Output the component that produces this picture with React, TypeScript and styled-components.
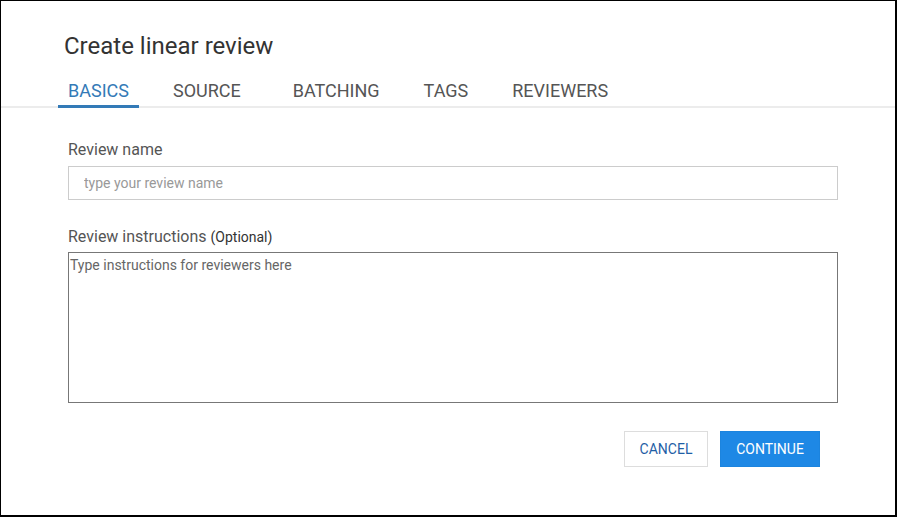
import React from 'react';
import styled, { createGlobalStyle } from 'styled-components';

const GlobalStyle = createGlobalStyle`
  html, body {
    margin: 0;
    padding: 0;
    background: #ffffff;
  }
  body {
    font-family: Roboto, 'Liberation Sans', Arial, sans-serif;
  }
  * {
    box-sizing: border-box;
  }
`;

const Frame = styled.div`
  width: 897px;
  height: 517px;
  border: 1px solid #000;
  border-right-width: 2px;
  border-bottom-width: 2px;
  background: #fff;
  display: flex;
  flex-direction: column;
`;

const Title = styled.h1`
  margin: 31px 0 0 63px;
  font-size: 24px;
  line-height: 28px;
  font-weight: 400;
  color: #333;
`;

const TabBar = styled.div`
  display: flex;
  margin-top: 21px;
  padding-left: 57px;
  border-bottom: 2px solid #ececec;
`;

const Tab = styled.div<{ active?: boolean; extra?: number }>`
  padding: 0 10px 4px;
  margin-right: ${p => 24 + (p.extra || 0)}px;
  margin-bottom: -2px;
  font-size: 18px;
  line-height: 20px;
  color: ${p => (p.active ? '#337ab7' : '#555')};
  border-bottom: 3px solid ${p => (p.active ? '#337ab7' : 'transparent')};
  cursor: pointer;
`;

const Body = styled.div`
  display: flex;
  flex-direction: column;
  padding: 32px 57px 0 67px;
`;

const Label = styled.label<{ gap: number }>`
  font-size: 16px;
  line-height: 19px;
  color: #555;
  margin-bottom: ${p => p.gap}px;
`;

const Optional = styled.span`
  font-size: 14px;
  color: #333;
`;

const TextInput = styled.input`
  width: 100%;
  height: 34px;
  border: 1px solid #ccc;
  padding: 0 15px;
  font-family: Roboto, 'Liberation Sans', Arial, sans-serif;
  font-size: 14px;
  color: #333;
  outline: none;
  margin-bottom: 27px;

  &::placeholder {
    color: #999;
  }
`;

const TextArea = styled.textarea`
  width: 100%;
  height: 151px;
  border: 1px solid #777;
  padding: 4px 1px;
  font-family: Roboto, 'Liberation Sans', Arial, sans-serif;
  font-size: 14px;
  line-height: 17px;
  resize: none;
  outline: none;
  margin: 0;
  display: block;

  &::placeholder {
    color: #666;
  }
`;

const Actions = styled.div`
  display: flex;
  justify-content: flex-end;
  gap: 12px;
  margin-top: 28px;
  padding-right: 18px;
`;

const Button = styled.button<{ primary?: boolean }>`
  height: 36px;
  width: ${p => (p.primary ? 100 : 84)}px;
  padding: 0;
  font-family: Roboto, 'Liberation Sans', Arial, sans-serif;
  font-size: 14px;
  text-transform: uppercase;
  cursor: pointer;
  border: 1px solid ${p => (p.primary ? '#1c84de' : '#ddd')};
  background: ${p => (p.primary ? '#1e88e5' : '#fff')};
  color: ${p => (p.primary ? '#fff' : '#1f5fa6')};
`;

const tabs = [
  { label: 'BASICS', active: true },
  { label: 'SOURCE', extra: 8 },
  { label: 'BATCHING' },
  { label: 'TAGS' },
  { label: 'REVIEWERS' },
];

export default function App() {
  return (
    <>
      <GlobalStyle />
      <Frame>
        <Title>Create linear review</Title>
        <TabBar>
          {tabs.map(t => (
            <Tab key={t.label} active={t.active} extra={t.extra}>
              {t.label}
            </Tab>
          ))}
        </TabBar>
        <Body>
          <Label gap={7}>Review name</Label>
          <TextInput placeholder="type your review name" />
          <Label gap={5}>
            Review instructions <Optional>(Optional)</Optional>
          </Label>
          <TextArea placeholder="Type instructions for reviewers here" />
          <Actions>
            <Button>Cancel</Button>
            <Button primary>Continue</Button>
          </Actions>
        </Body>
      </Frame>
    </>
  );
}
